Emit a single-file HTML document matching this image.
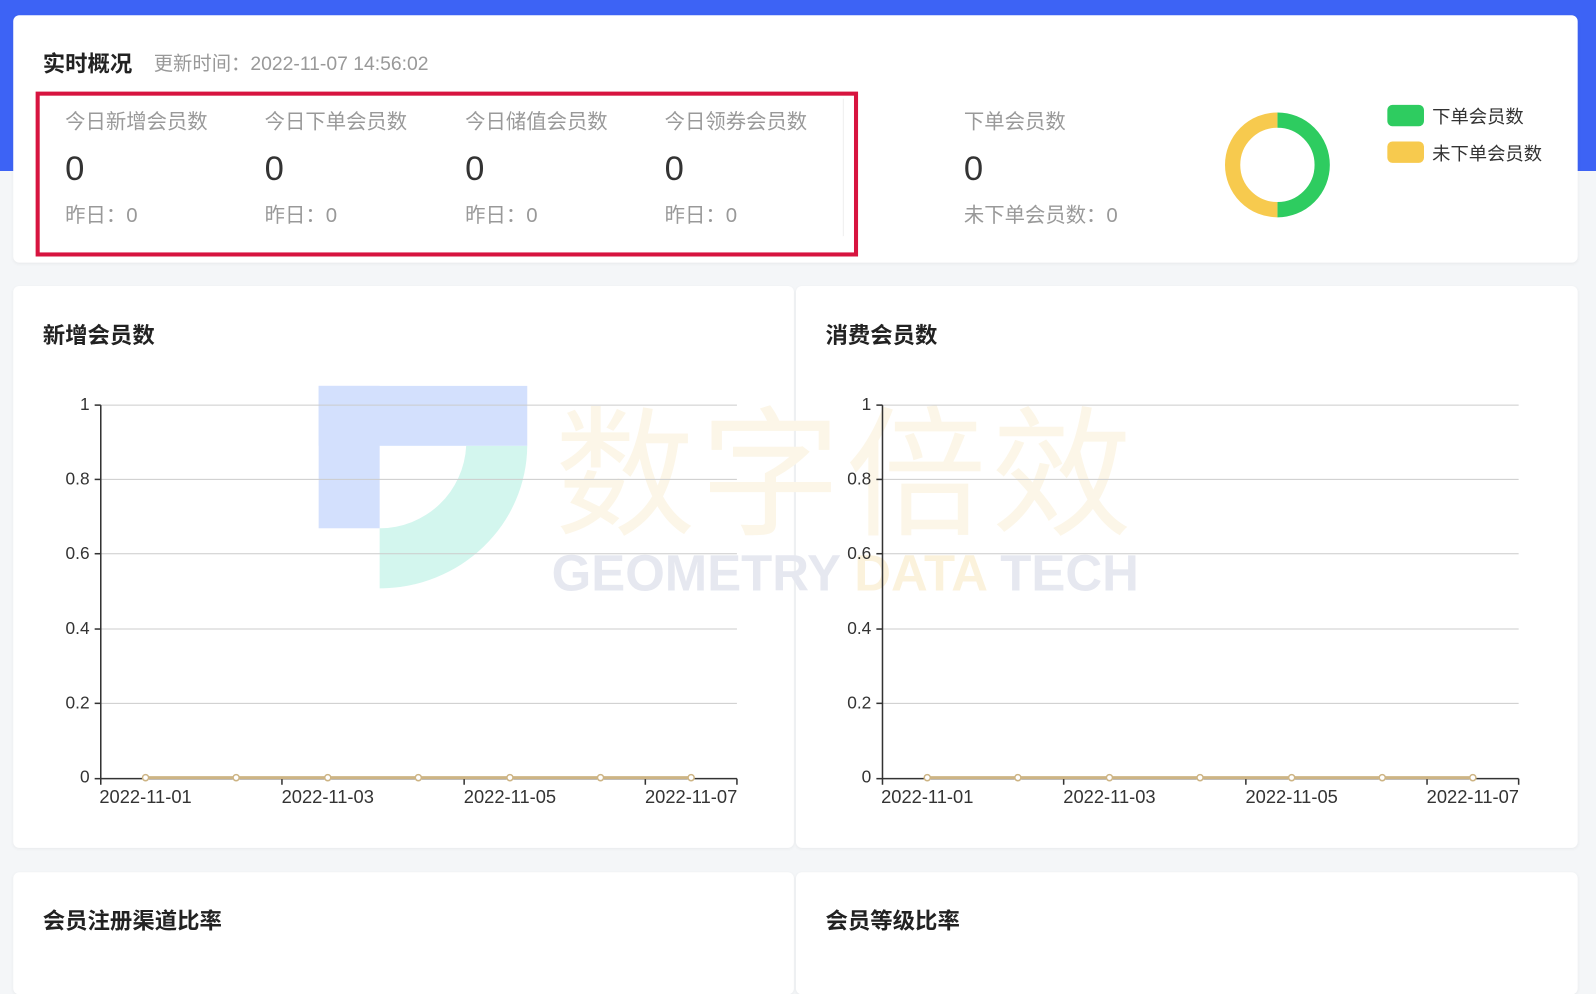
<!DOCTYPE html>
<html><head><meta charset="utf-8"><style>
*{margin:0;padding:0;box-sizing:border-box}
html,body{width:1596px;height:973px;overflow:hidden;background:#f4f6f8;font-family:"Liberation Sans","Noto Sans CJK SC",sans-serif}
#w{position:absolute;left:0;top:0;width:1568px;height:956px;transform:scale(1.01786);transform-origin:0 0}
.blue{position:absolute;left:0;top:0;width:1568px;height:168px;background:#3d63f5}
.card{position:absolute;background:#fff;border-radius:6px;box-shadow:0 1px 3px rgba(0,0,0,.05)}
.abs{position:absolute;white-space:nowrap}
.t{font-size:22px;font-weight:bold;color:#222}
.lbl{font-size:20px;color:#999}
.val{font-size:34px;color:#333}
</style></head><body><div id="w">
<div class="blue"></div>
<div class="card" style="left:13px;top:15px;width:1537px;height:243px"></div>
<div class="abs t" style="left:42px;top:45px">实时概况</div>
<div class="abs" style="left:151px;top:48px;font-size:19px;color:#999">更新时间：2022-11-07 14:56:02</div>
<div class="abs" style="left:35px;top:90px;width:808px;height:162px;border:4px solid #d7143f"></div>
<div class="abs" style="left:828px;top:97px;width:1px;height:135px;background:#eee"></div>

<div class="abs lbl" style="left:64px;top:103px">今日新增会员数</div>
<div class="abs val" style="left:64px;top:147px">0</div>
<div class="abs lbl" style="left:64px;top:195px">昨日：0</div>
<div class="abs lbl" style="left:260px;top:103px">今日下单会员数</div>
<div class="abs val" style="left:260px;top:147px">0</div>
<div class="abs lbl" style="left:260px;top:195px">昨日：0</div>
<div class="abs lbl" style="left:457px;top:103px">今日储值会员数</div>
<div class="abs val" style="left:457px;top:147px">0</div>
<div class="abs lbl" style="left:457px;top:195px">昨日：0</div>
<div class="abs lbl" style="left:653px;top:103px">今日领券会员数</div>
<div class="abs val" style="left:653px;top:147px">0</div>
<div class="abs lbl" style="left:653px;top:195px">昨日：0</div>

<div class="abs lbl" style="left:947px;top:103px">下单会员数</div>
<div class="abs val" style="left:947px;top:147px">0</div>
<div class="abs lbl" style="left:947px;top:195px">未下单会员数：0</div>
<svg class="abs" style="left:1195px;top:102px" width="120" height="120">
<path d="M60 16 A44 44 0 0 1 60 104" fill="none" stroke="#2ecc60" stroke-width="15"/>
<path d="M60 104 A44 44 0 0 1 60 16" fill="none" stroke="#f7ca4e" stroke-width="15"/>
</svg>
<div class="abs" style="left:1363px;top:103px;width:36px;height:21px;border-radius:5px;background:#2ecc60"></div>
<div class="abs" style="left:1407px;top:101px;font-size:18px;color:#333">下单会员数</div>
<div class="abs" style="left:1363px;top:139px;width:36px;height:21px;border-radius:5px;background:#f7ca4e"></div>
<div class="abs" style="left:1407px;top:137px;font-size:18px;color:#333">未下单会员数</div>

<div class="card" style="left:13px;top:281px;width:767px;height:552px"></div>
<div class="card" style="left:782px;top:281px;width:768px;height:552px"></div>
<div class="abs t" style="left:42px;top:312px">新增会员数</div>
<div class="abs t" style="left:811px;top:312px">消费会员数</div>

<!-- watermark -->
<svg class="abs" style="left:313px;top:379px" width="206" height="200">
<rect x="0" y="0" width="205" height="59" fill="#d3e0fd"/><rect x="0" y="0" width="60" height="140" fill="#d3e0fd"/>
<path d="M60 140 A85 85 0 0 0 145 59 L205 59 A145 141 0 0 1 60 199 Z" fill="#d3f6ee"/>
</svg>
<div class="abs" style="left:545px;top:355px;font-size:138px;color:#fcf6e8;letter-spacing:5px">数字倍效</div>
<div class="abs" style="left:542px;top:534px;font-size:50px;font-weight:bold;color:#e6e8f0">GEOMETRY <span style="color:#fbf2dc">DATA</span> TECH</div>

<svg class="abs" style="left:0;top:0" width="1568" height="956" font-family="Liberation Sans,sans-serif" font-size="17" fill="#333">
<g id="c1">
<g stroke="#ccc" stroke-width="1">
<line x1="99" y1="398" x2="724" y2="398"/><line x1="99" y1="471" x2="724" y2="471"/><line x1="99" y1="544" x2="724" y2="544"/><line x1="99" y1="618" x2="724" y2="618"/><line x1="99" y1="691" x2="724" y2="691"/>
</g>
<g stroke="#333" stroke-width="1.5">
<line x1="99" y1="398" x2="99" y2="765"/><line x1="99" y1="765" x2="724" y2="765"/>
<line x1="93" y1="398" x2="99" y2="398"/><line x1="93" y1="471" x2="99" y2="471"/><line x1="93" y1="544" x2="99" y2="544"/><line x1="93" y1="618" x2="99" y2="618"/><line x1="93" y1="691" x2="99" y2="691"/><line x1="93" y1="765" x2="99" y2="765"/>
<line x1="99" y1="765" x2="99" y2="771"/><line x1="277" y1="765" x2="277" y2="771"/><line x1="456" y1="765" x2="456" y2="771"/><line x1="634" y1="765" x2="634" y2="771"/><line x1="724" y1="765" x2="724" y2="771"/>
</g>
<g text-anchor="end"><text x="88" y="403">1</text><text x="88" y="476">0.8</text><text x="88" y="549">0.6</text><text x="88" y="623">0.4</text><text x="88" y="696">0.2</text><text x="88" y="769">0</text></g>
<g text-anchor="middle" font-size="18"><text x="143" y="789">2022-11-01</text><text x="322" y="789">2022-11-03</text><text x="501" y="789">2022-11-05</text><text x="679" y="789">2022-11-07</text></g>
<line x1="143" y1="764" x2="679" y2="764" stroke="#cdb484" stroke-width="3"/>
<g fill="#fff" stroke="#cdb484" stroke-width="1.5"><circle cx="143" cy="764" r="3"/><circle cx="232" cy="764" r="3"/><circle cx="322" cy="764" r="3"/><circle cx="411" cy="764" r="3"/><circle cx="501" cy="764" r="3"/><circle cx="590" cy="764" r="3"/><circle cx="679" cy="764" r="3"/></g>
</g>
<use href="#c1" x="768" y="0"/>
</svg>

<div class="card" style="left:13px;top:857px;width:767px;height:120px"></div>
<div class="card" style="left:782px;top:857px;width:768px;height:120px"></div>
<div class="abs t" style="left:42px;top:887px">会员注册渠道比率</div>
<div class="abs t" style="left:811px;top:887px">会员等级比率</div>
</div></body></html>
